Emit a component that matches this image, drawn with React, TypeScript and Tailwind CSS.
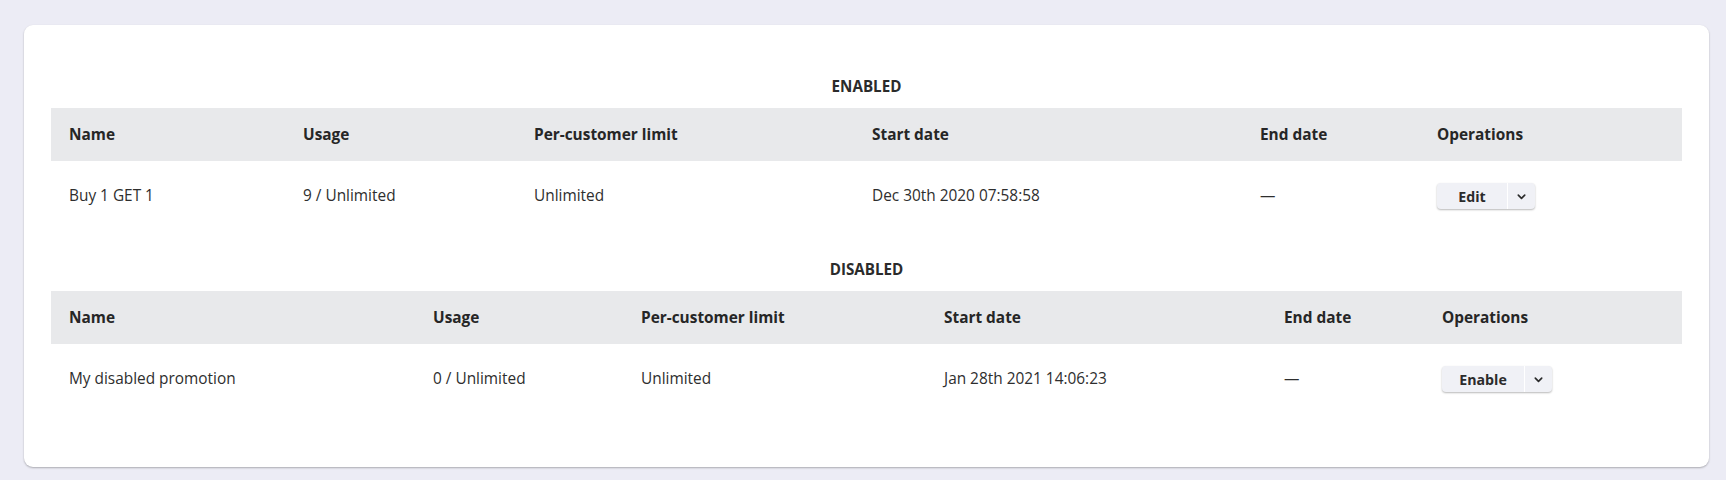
import React from "react";

type Row = { name: string; usage: string; limit: string; start: string; end: string; action: string };

function Chevron() {
  return (
    <svg width="11" height="11" viewBox="0 0 12 12" fill="none">
      <path d="M2.5 4.5 L6 8 L9.5 4.5" stroke="#2b2b2b" strokeWidth="1.8" strokeLinecap="round" strokeLinejoin="round" />
    </svg>
  );
}

function SplitButton({ label, mainW }: { label: string; mainW: string }) {
  return (
    <div className="inline-flex h-[26px] rounded-[4px] bg-[#f0f1f6] shadow-[0_1px_2px_rgba(0,0,0,0.28)] align-middle">
      <button className={`${mainW} h-full flex items-center justify-center text-[14.2px] font-bold text-[#2b2b2b] border-r border-white`}>
        {label}
      </button>
      <button className="w-[27px] h-full flex items-center justify-center">
        <Chevron />
      </button>
    </div>
  );
}

function Section({
  title,
  widths,
  row,
  mainW,
  first,
}: {
  title: string;
  widths: string[];
  row: Row;
  mainW: string;
  first?: boolean;
}) {
  const headers = ["Name", "Usage", "Per-customer limit", "Start date", "End date", "Operations"];
  const cells = [row.name, row.usage, row.limit, row.start, row.end];
  return (
    <div className={first ? "" : "mt-[27px]"}>
      <div className="h-[22px] leading-[22px] text-center text-[15.2px] font-bold text-[#2b2b2b] mb-[11px]">{title}</div>
      <table className="w-full table-fixed border-collapse">
        <colgroup>
          {widths.map((w, i) => (
            <col key={i} className={w} />
          ))}
        </colgroup>
        <thead>
          <tr className="bg-[#e8e9eb] h-[53px]">
            {headers.map((h) => (
              <th key={h} className="text-left pl-[18px] text-[15.4px] font-bold text-[#262626]">
                {h}
              </th>
            ))}
          </tr>
        </thead>
        <tbody>
          <tr className="h-[70px]">
            {cells.map((c, i) => (
              <td key={i} className="pl-[18px] text-[15.4px] text-[#2e2e2e]">
                {c}
              </td>
            ))}
            <td className="pl-[18px]">
              <SplitButton label={row.action} mainW={mainW} />
            </td>
          </tr>
        </tbody>
      </table>
    </div>
  );
}

export default function App() {
  return (
    <div
      className="min-h-[480px] bg-[#ececf5] pt-[25px] pl-[24px] pr-[17px] pb-[13px]"
      style={{ fontFamily: '"Open Sans", "Noto Sans", sans-serif' }}
    >
      <div className="bg-white rounded-[9px] shadow-[0_1px_2px_rgba(0,0,0,0.28)] px-[27px] pt-[50px] pb-[53px]">
        <Section
          first
          title="ENABLED"
          widths={["w-[234px]", "w-[231px]", "w-[338px]", "w-[388px]", "w-[177px]", "w-auto"]}
          row={{
            name: "Buy 1 GET 1",
            usage: "9 / Unlimited",
            limit: "Unlimited",
            start: "Dec 30th 2020 07:58:58",
            end: "—",
            action: "Edit",
          }}
          mainW="w-[71px]"
        />
        <Section
          title="DISABLED"
          widths={["w-[364px]", "w-[208px]", "w-[303px]", "w-[340px]", "w-[158px]", "w-auto"]}
          row={{
            name: "My disabled promotion",
            usage: "0 / Unlimited",
            limit: "Unlimited",
            start: "Jan 28th 2021 14:06:23",
            end: "—",
            action: "Enable",
          }}
          mainW="w-[83px]"
        />
      </div>
    </div>
  );
}
